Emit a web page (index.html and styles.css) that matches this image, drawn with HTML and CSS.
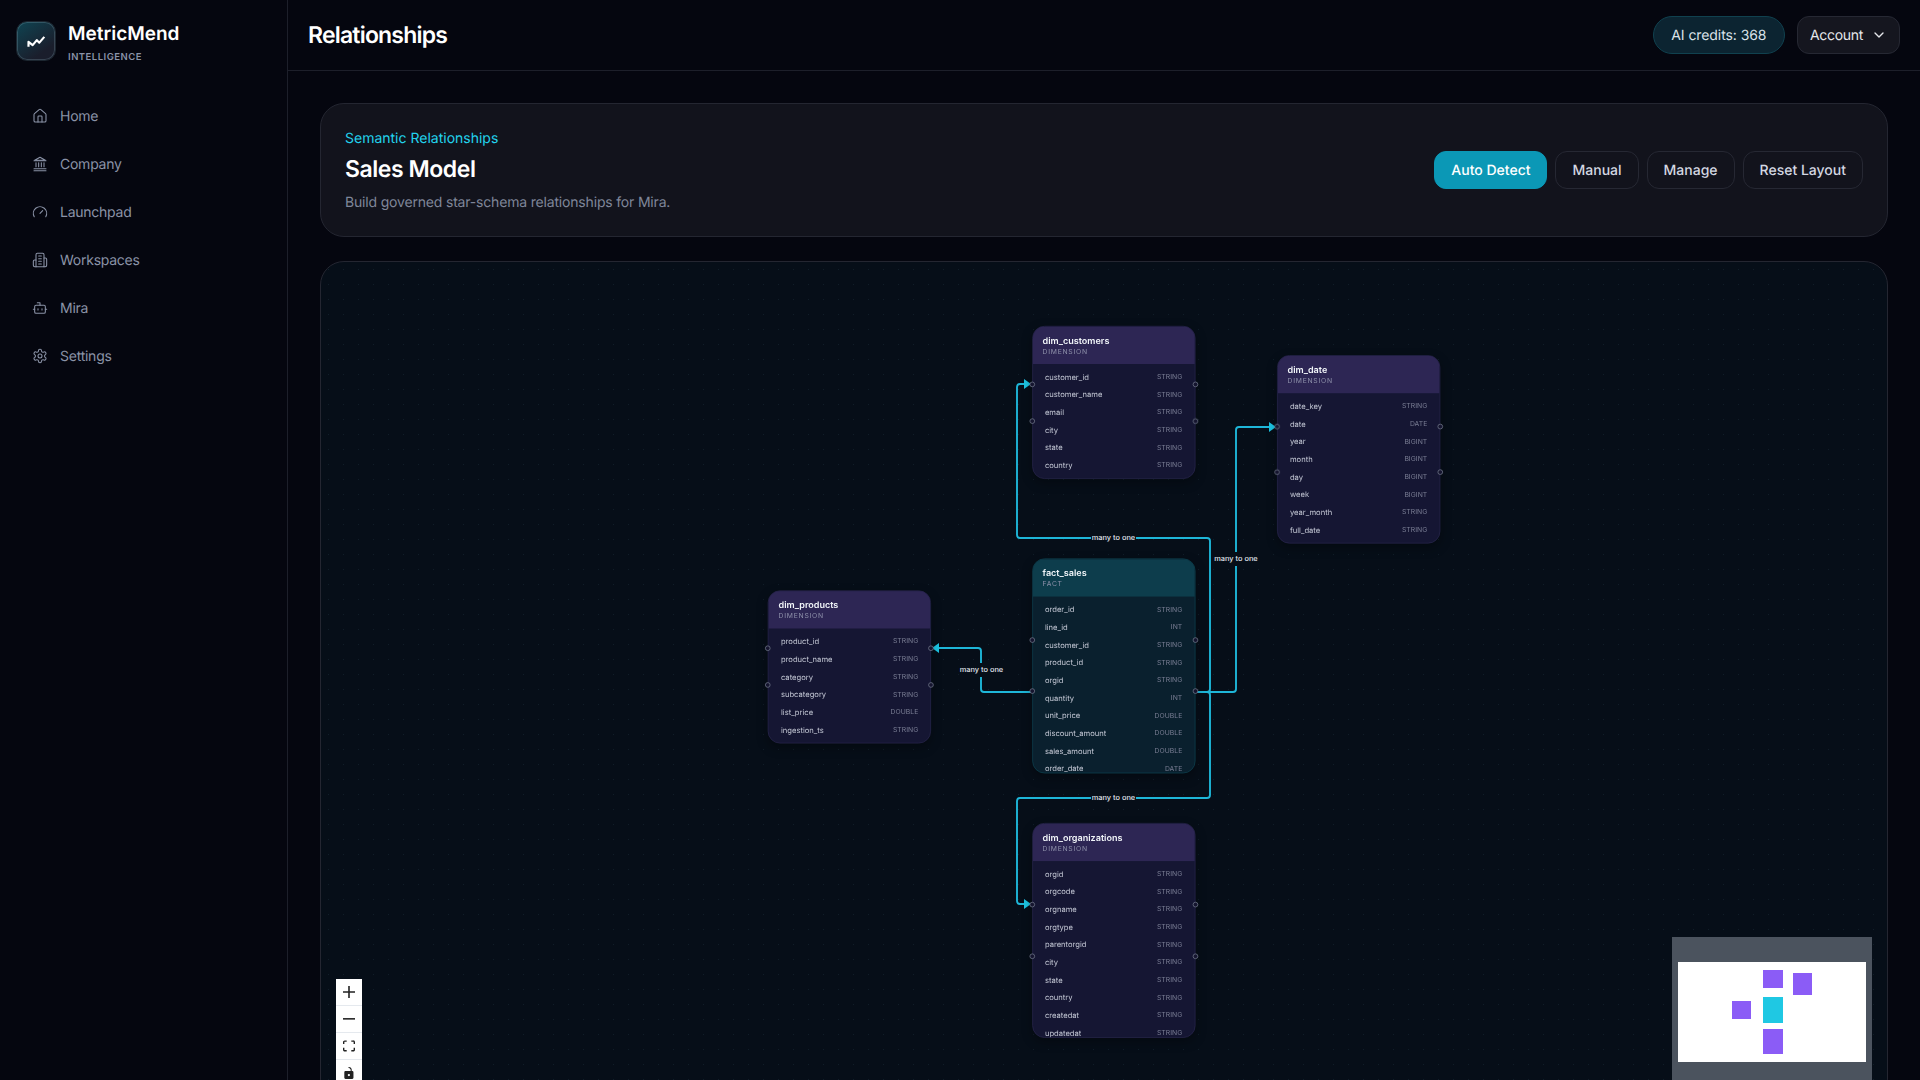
FILE: index.html
```html
<!DOCTYPE html>
<html lang="en">
<head>
    <meta charset="UTF-8">
    <title>Relationships - MetricMend</title>
    <link rel="stylesheet" href="styles.css">
</head>
<body>
    <aside class="sidebar">
        <div class="brand">
            <div class="brand-logo">
                <svg viewBox="0 0 24 24" width="20" height="20" fill="none" stroke="#fff" stroke-width="2.6" stroke-linejoin="round"><path d="M3 19v-6l5 4 5-6 3 3 6-7"/></svg>
            </div>
            <div>
                <div class="brand-name">MetricMend</div>
                <div class="brand-sub">INTELLIGENCE</div>
            </div>
        </div>
        <nav class="nav">
            <a class="nav-item">
                <svg class="nav-icon" viewBox="0 0 24 24"><path d="M15 21v-8a1 1 0 0 0-1-1h-4a1 1 0 0 0-1 1v8"/><path d="M3 10a2 2 0 0 1 .709-1.528l7-5.999a2 2 0 0 1 2.582 0l7 5.999A2 2 0 0 1 21 10v9a2 2 0 0 1-2 2H5a2 2 0 0 1-2-2z"/></svg>
                Home
            </a>
            <a class="nav-item">
                <svg class="nav-icon" viewBox="0 0 24 24"><path d="M3 22h18"/><path d="M3 19h18"/><path d="M6 16v-6"/><path d="M10 16v-6"/><path d="M14 16v-6"/><path d="M18 16v-6"/><path d="M3 7h18"/><path d="M12 2 4 6.5h16z"/></svg>
                Company
            </a>
            <a class="nav-item">
                <svg class="nav-icon" viewBox="0 0 24 24"><path d="m12 14 4-4"/><path d="M3.34 19a10 10 0 1 1 17.32 0"/></svg>
                Launchpad
            </a>
            <a class="nav-item">
                <svg class="nav-icon" viewBox="0 0 24 24"><path d="M6 22V4a2 2 0 0 1 2-2h8a2 2 0 0 1 2 2v18Z"/><path d="M6 12H4a2 2 0 0 0-2 2v6a2 2 0 0 0 2 2h2"/><path d="M18 9h2a2 2 0 0 1 2 2v9a2 2 0 0 1-2 2h-2"/><path d="M10 6h4"/><path d="M10 10h4"/><path d="M10 14h4"/><path d="M10 18h4"/></svg>
                Workspaces
            </a>
            <a class="nav-item">
                <svg class="nav-icon" viewBox="0 0 24 24"><path d="M12 8V4H8"/><rect width="16" height="12" x="4" y="8" rx="2"/><path d="M2 14h2"/><path d="M20 14h2"/><path d="M15 13v2"/><path d="M9 13v2"/></svg>
                Mira
            </a>
            <a class="nav-item">
                <svg class="nav-icon" viewBox="0 0 24 24"><path d="M12.22 2h-.44a2 2 0 0 0-2 2v.18a2 2 0 0 1-1 1.73l-.43.25a2 2 0 0 1-2 0l-.15-.08a2 2 0 0 0-2.73.73l-.22.38a2 2 0 0 0 .73 2.73l.15.1a2 2 0 0 1 1 1.72v.51a2 2 0 0 1-1 1.74l-.15.09a2 2 0 0 0-.73 2.73l.22.38a2 2 0 0 0 2.73.73l.15-.08a2 2 0 0 1 2 0l.43.25a2 2 0 0 1 1 1.73V20a2 2 0 0 0 2 2h.44a2 2 0 0 0 2-2v-.18a2 2 0 0 1 1-1.73l.43-.25a2 2 0 0 1 2 0l.15.08a2 2 0 0 0 2.73-.73l.22-.39a2 2 0 0 0-.73-2.73l-.15-.08a2 2 0 0 1-1-1.74v-.5a2 2 0 0 1 1-1.74l.15-.09a2 2 0 0 0 .73-2.73l-.22-.38a2 2 0 0 0-2.73-.73l-.15.08a2 2 0 0 1-2 0l-.43-.25a2 2 0 0 1-1-1.73V4a2 2 0 0 0-2-2z"/><circle cx="12" cy="12" r="3"/></svg>
                Settings
            </a>
        </nav>
    </aside>

    <div class="main">
        <header class="topbar">
            <h1 class="page-title">Relationships</h1>
            <div class="topbar-right">
                <div class="credits">AI credits: 368</div>
                <button class="account">
                    Account
                    <svg viewBox="0 0 24 24" width="16" height="16" fill="none" stroke="currentColor" stroke-width="2" stroke-linecap="round" stroke-linejoin="round"><path d="m6 9 6 6 6-6"/></svg>
                </button>
            </div>
        </header>

        <div class="content">
            <section class="hero">
                <div>
                    <div class="hero-kicker">Semantic Relationships</div>
                    <h2 class="hero-title">Sales Model</h2>
                    <p class="hero-text">Build governed star-schema relationships for Mira.</p>
                </div>
                <div class="hero-actions">
                    <button class="btn btn-primary">Auto Detect</button>
                    <button class="btn">Manual</button>
                    <button class="btn">Manage</button>
                    <button class="btn">Reset Layout</button>
                </div>
            </section>

            <section class="canvas">
                <!-- viewBox is in page pixels so the edges read the same as the screenshot -->
                <svg class="edges" viewBox="321 262 1566 840">
                    <g class="edge-lines">
                        <path d="M1195 692H1207a3 3 0 0 0 3-3V541a3 3 0 0 0-3-3H1020a3 3 0 0 1-3-3V387a3 3 0 0 1 3-3H1026"/>
                        <path d="M1195 692H1233a3 3 0 0 0 3-3V430a3 3 0 0 1 3-3H1271"/>
                        <path d="M1032 692H984a3 3 0 0 1-3-3V651a3 3 0 0 0-3-3H937"/>
                        <path d="M1195 692H1207a3 3 0 0 1 3 3V795a3 3 0 0 1-3 3H1020a3 3 0 0 0-3 3V901a3 3 0 0 0 3 3H1026"/>
                    </g>
                    <g class="edge-arrows">
                        <path d="M1024 379l7 5-7 5z"/>
                        <path d="M1269 422l7 5-7 5z"/>
                        <path d="M939 643l-7 5 7 5z"/>
                        <path d="M1024 899l7 5-7 5z"/>
                    </g>
                    <g class="edge-labels">
                        <rect x="1091" y="531" width="45" height="14"/>
                        <text x="1113.5" y="540">many to one</text>
                        <rect x="1213" y="552" width="46" height="14"/>
                        <text x="1236" y="561">many to one</text>
                        <rect x="959" y="663" width="45" height="14"/>
                        <text x="981.5" y="672">many to one</text>
                        <rect x="1091" y="791" width="45" height="14"/>
                        <text x="1113.5" y="800">many to one</text>
                    </g>
                </svg>

                <div class="flow">
                    <div class="node node-customers">
                        <span class="handle handle-l1"></span><span class="handle handle-l2"></span>
                        <span class="handle handle-r1"></span><span class="handle handle-r2"></span>
                        <div class="node-inner">
                            <div class="node-head"><div class="node-name">dim_customers</div><div class="node-kind">DIMENSION</div></div>
                            <div class="node-rows">
                                <div class="row"><span>customer_id</span><span class="row-type">STRING</span></div>
                                <div class="row"><span>customer_name</span><span class="row-type">STRING</span></div>
                                <div class="row"><span>email</span><span class="row-type">STRING</span></div>
                                <div class="row"><span>city</span><span class="row-type">STRING</span></div>
                                <div class="row"><span>state</span><span class="row-type">STRING</span></div>
                                <div class="row"><span>country</span><span class="row-type">STRING</span></div>
                            </div>
                        </div>
                    </div>

                    <div class="node node-date">
                        <span class="handle handle-l1"></span><span class="handle handle-l2"></span>
                        <span class="handle handle-r1"></span><span class="handle handle-r2"></span>
                        <div class="node-inner">
                            <div class="node-head"><div class="node-name">dim_date</div><div class="node-kind">DIMENSION</div></div>
                            <div class="node-rows">
                                <div class="row"><span>date_key</span><span class="row-type">STRING</span></div>
                                <div class="row"><span>date</span><span class="row-type">DATE</span></div>
                                <div class="row"><span>year</span><span class="row-type">BIGINT</span></div>
                                <div class="row"><span>month</span><span class="row-type">BIGINT</span></div>
                                <div class="row"><span>day</span><span class="row-type">BIGINT</span></div>
                                <div class="row"><span>week</span><span class="row-type">BIGINT</span></div>
                                <div class="row"><span>year_month</span><span class="row-type">STRING</span></div>
                                <div class="row"><span>full_date</span><span class="row-type">STRING</span></div>
                            </div>
                        </div>
                    </div>

                    <div class="node node-products">
                        <span class="handle handle-l1"></span><span class="handle handle-l2"></span>
                        <span class="handle handle-r1"></span><span class="handle handle-r2"></span>
                        <div class="node-inner">
                            <div class="node-head"><div class="node-name">dim_products</div><div class="node-kind">DIMENSION</div></div>
                            <div class="node-rows">
                                <div class="row"><span>product_id</span><span class="row-type">STRING</span></div>
                                <div class="row"><span>product_name</span><span class="row-type">STRING</span></div>
                                <div class="row"><span>category</span><span class="row-type">STRING</span></div>
                                <div class="row"><span>subcategory</span><span class="row-type">STRING</span></div>
                                <div class="row"><span>list_price</span><span class="row-type">DOUBLE</span></div>
                                <div class="row"><span>ingestion_ts</span><span class="row-type">STRING</span></div>
                            </div>
                        </div>
                    </div>

                    <div class="node node-fact node-sales">
                        <span class="handle handle-l1"></span><span class="handle handle-l2"></span>
                        <span class="handle handle-r1"></span><span class="handle handle-r2"></span>
                        <div class="node-inner">
                            <div class="node-head"><div class="node-name">fact_sales</div><div class="node-kind">FACT</div></div>
                            <div class="node-rows">
                                <div class="row"><span>order_id</span><span class="row-type">STRING</span></div>
                                <div class="row"><span>line_id</span><span class="row-type">INT</span></div>
                                <div class="row"><span>customer_id</span><span class="row-type">STRING</span></div>
                                <div class="row"><span>product_id</span><span class="row-type">STRING</span></div>
                                <div class="row"><span>orgid</span><span class="row-type">STRING</span></div>
                                <div class="row"><span>quantity</span><span class="row-type">INT</span></div>
                                <div class="row"><span>unit_price</span><span class="row-type">DOUBLE</span></div>
                                <div class="row"><span>discount_amount</span><span class="row-type">DOUBLE</span></div>
                                <div class="row"><span>sales_amount</span><span class="row-type">DOUBLE</span></div>
                                <div class="row"><span>order_date</span><span class="row-type">DATE</span></div>
                            </div>
                        </div>
                    </div>

                    <div class="node node-orgs">
                        <span class="handle handle-l1"></span><span class="handle handle-l2"></span>
                        <span class="handle handle-r1"></span><span class="handle handle-r2"></span>
                        <div class="node-inner">
                            <div class="node-head"><div class="node-name">dim_organizations</div><div class="node-kind">DIMENSION</div></div>
                            <div class="node-rows">
                                <div class="row"><span>orgid</span><span class="row-type">STRING</span></div>
                                <div class="row"><span>orgcode</span><span class="row-type">STRING</span></div>
                                <div class="row"><span>orgname</span><span class="row-type">STRING</span></div>
                                <div class="row"><span>orgtype</span><span class="row-type">STRING</span></div>
                                <div class="row"><span>parentorgid</span><span class="row-type">STRING</span></div>
                                <div class="row"><span>city</span><span class="row-type">STRING</span></div>
                                <div class="row"><span>state</span><span class="row-type">STRING</span></div>
                                <div class="row"><span>country</span><span class="row-type">STRING</span></div>
                                <div class="row"><span>createdat</span><span class="row-type">STRING</span></div>
                                <div class="row"><span>updatedat</span><span class="row-type">STRING</span></div>
                            </div>
                        </div>
                    </div>
                </div>

                <div class="controls">
                    <button class="control"><svg viewBox="0 0 32 32"><path d="M32 18.133H18.133V32h-4.266V18.133H0v-4.266h13.867V0h4.266v13.867H32z"/></svg></button>
                    <button class="control"><svg viewBox="0 0 32 5"><path d="M0 0h32v4.2H0z"/></svg></button>
                    <button class="control"><svg viewBox="0 0 32 30"><path d="M3.692 4.63c0-.53.4-.938.939-.938h5.215V0H4.708C2.13 0 0 2.054 0 4.63v5.216h3.692V4.631zM27.354 0h-5.2v3.692h5.17c.53 0 .984.4.984.939v5.215H32V4.631A4.624 4.624 0 0027.354 0zm.954 24.83c0 .532-.4.94-.939.94h-5.215v3.768h5.215c2.577 0 4.631-2.13 4.631-4.707v-5.139h-3.692v5.139zm-23.677.94c-.531 0-.939-.4-.939-.94v-5.138H0v5.139c0 2.577 2.13 4.707 4.708 4.707h5.138V25.77H4.631z"/></svg></button>
                    <button class="control"><svg viewBox="0 0 25 32"><path d="M21.333 10.667H19.81V7.619C19.81 3.429 16.38 0 12.19 0c-4.114 1.828-1.37 2.133.305 2.438 1.676.305 4.42 2.59 4.42 5.181v3.048H3.047A3.056 3.056 0 000 13.714v15.238A3.056 3.056 0 003.048 32h18.285a3.056 3.056 0 003.048-3.048V13.714a3.056 3.056 0 00-3.048-3.047zM12.19 24.533a3.056 3.056 0 01-3.047-3.047 3.056 3.056 0 013.047-3.048 3.056 3.056 0 013.048 3.048 3.056 3.056 0 01-3.048 3.047z"/></svg></button>
                </div>

                <div class="minimap">
                    <div class="minimap-view">
                        <span class="mini mini-customers"></span>
                        <span class="mini mini-date"></span>
                        <span class="mini mini-products"></span>
                        <span class="mini mini-fact"></span>
                        <span class="mini mini-orgs"></span>
                    </div>
                </div>
            </section>
        </div>
    </div>
</body>
</html>
```

FILE: styles.css
```css
* {
    box-sizing: border-box;
}

html, body {
    height: 100%;
    margin: 0;
    overflow: hidden;
}

body {
    display: flex;
    font-family: 'Inter', sans-serif;
    text-rendering: geometricPrecision;
    background-color: #05060f;
    color: #fff;
}

button {
    font-family: inherit;
    text-rendering: inherit;
    cursor: pointer;
}

/* sidebar */
.sidebar {
    width: 288px;
    flex: none;
    border-right: 1px solid #1d1f2a;
    background-color: #05060f;
}

.brand {
    display: flex;
    align-items: flex-start;
    gap: 12px;
    padding: 21px 16px 0;
    height: 70px;
}

.brand-logo {
    width: 40px;
    height: 40px;
    flex: none;
    display: flex;
    align-items: center;
    justify-content: center;
    border-radius: 11px;
    border: 1px solid #1c2630;
    background: linear-gradient(145deg, #0f4452, #1a1e2c 75%);
    box-shadow: inset 0 0 0 1px rgba(160, 200, 215, 0.22);
}

.brand-name {
    font-size: 19px;
    font-weight: 600;
    line-height: 26px;
}

.brand-sub {
    margin-top: 4px;
    font-size: 9.5px;
    font-weight: 600;
    line-height: 14px;
    letter-spacing: 0.5px;
    color: #8a93a8;
}

.nav {
    display: flex;
    flex-direction: column;
    padding: 22px 16px 0;
}

.nav-item {
    display: flex;
    align-items: center;
    gap: 12px;
    height: 48px;
    padding-left: 16px;
    font-size: 14px;
    letter-spacing: -0.25px;
    color: #8b93a7;
}

.nav-icon {
    width: 16px;
    height: 16px;
    flex: none;
    fill: none;
    stroke: currentColor;
    stroke-width: 1.6;
    stroke-linecap: round;
    stroke-linejoin: round;
}

/* top bar */
.main {
    flex: 1;
    min-width: 0;
    display: flex;
    flex-direction: column;
}

.topbar {
    height: 71px;
    flex: none;
    display: flex;
    align-items: center;
    justify-content: space-between;
    padding: 0 20px;
    border-bottom: 1px solid #1d1f2a;
}

.page-title {
    margin: 0;
    font-size: 23px;
    font-weight: 600;
    letter-spacing: -0.8px;
}

.topbar-right {
    display: flex;
    align-items: center;
    gap: 12px;
}

.credits {
    height: 38px;
    padding: 0 17.5px;
    display: flex;
    align-items: center;
    border-radius: 19px;
    border: 1px solid #10414f;
    background-color: #0c2431;
    font-size: 14px;
    letter-spacing: -0.08px;
    color: #dbe2ea;
}

.account {
    height: 38px;
    padding: 0 12px;
    display: flex;
    align-items: center;
    gap: 8px;
    border-radius: 12px;
    border: 1px solid #262833;
    background-color: #15161f;
    font-size: 14px;
    letter-spacing: -0.3px;
    color: #e5e7eb;
}

/* page content */
.content {
    flex: 1;
    padding: 32px 32px 0;
    display: flex;
    flex-direction: column;
    gap: 24px;
}

.hero {
    height: 134px;
    flex: none;
    display: flex;
    align-items: center;
    justify-content: space-between;
    padding: 0 24px;
    border-radius: 24px;
    border: 1px solid #242631;
    background-color: #12131c;
}

.hero-kicker {
    margin-top: 1px;
    font-size: 14px;
    line-height: 20px;
    color: #22d3ee;
}

.hero-title {
    margin: 4px 0 0;
    font-size: 23px;
    font-weight: 600;
    line-height: 32px;
    letter-spacing: -0.45px;
}

.hero-text {
    margin: 8px 0 0;
    font-size: 14px;
    line-height: 20px;
    letter-spacing: -0.18px;
    color: #7f8699;
}

.hero-actions {
    display: flex;
    gap: 8px;
}

.btn {
    height: 38px;
    padding: 0 16px;
    border-radius: 12px;
    border: 1px solid #262833;
    background-color: #12131c;
    font-size: 14px;
    font-weight: 500;
    color: #d4d8e2;
}

.btn-primary {
    border-color: #0b98b6;
    background-color: #0b98b6;
    color: #fff;
}

/* relationship canvas */
.canvas {
    position: relative;
    height: 842px;
    flex: none;
    overflow: hidden;
    border-radius: 24px;
    border: 1px solid #242631;
    background-color: #060e18;
    background-image: radial-gradient(circle, rgba(120, 170, 190, 0.1) 0.7px, transparent 0.8px);
    background-size: 15px 15px;
}

.edges {
    position: absolute;
    left: 0;
    top: 0;
    width: 1566px;
    height: 840px;
}

.edge-lines path {
    fill: none;
    stroke: #1eb6d8;
    stroke-width: 1.9;
}

.edge-arrows path {
    fill: #1cc4e2;
}

.edge-labels rect {
    fill: #060e18;
}

.edge-labels text {
    font-size: 7.4px;
    font-weight: 500;
    text-anchor: middle;
    fill: #e2e8f0;
}

/* flow is scaled the way a zoomed diagram viewport is */
.flow {
    position: absolute;
    left: 0;
    top: 0;
    width: 0;
    height: 0;
    transform: scale(0.68);
    transform-origin: 0 0;
}

.node {
    position: absolute;
    width: 240px;
}

.node-customers { left: 1045.6px; top: 94px; }
.node-date { left: 1405.9px; top: 137px; }
.node-products { left: 657.4px; top: 482.5px; }
.node-sales { left: 1045.6px; top: 435.5px; }
.node-orgs { left: 1045.6px; top: 825px; }

.node-inner {
    overflow: hidden;
    max-height: 316px;
    border-radius: 18px;
    border: 1.5px solid #2b2850;
    background-color: #151633;
    box-shadow: 0 6px 16px rgba(0, 0, 0, 0.3);
}

.node-head {
    height: 55px;
    padding: 12px 14.5px 0;
    background-color: #2d2654;
}

.node-name {
    font-size: 13.3px;
    font-weight: 600;
    line-height: 18px;
    color: #f1f5f9;
}

.node-kind {
    font-size: 10px;
    line-height: 14px;
    letter-spacing: 1.1px;
    color: #8f92ab;
}

.node-rows {
    padding: 6px 18px;
}

.row {
    height: 26px;
    display: flex;
    align-items: center;
    justify-content: space-between;
    font-size: 11.2px;
    color: #c3c7d4;
}

.row-type {
    font-size: 10px;
    letter-spacing: 0.05px;
    color: #7a7e94;
}

.node-fact .node-inner {
    border-color: #0e4654;
    background-color: #0a202e;
}

.node-fact .node-head {
    background-color: #0d3d4c;
}

.handle {
    position: absolute;
    z-index: 1;
    width: 8px;
    height: 8px;
    margin: -4px;
    border-radius: 50%;
    border: 1.5px solid #7b8194;
    background-color: #15152f;
}

.handle-l1 { left: 0; top: 38%; }
.handle-l2 { left: 0; top: 62%; }
.handle-r1 { left: 100%; top: 38%; }
.handle-r2 { left: 100%; top: 62%; }

/* zoom controls */
.controls {
    position: absolute;
    left: 15px;
    bottom: 15px;
    display: flex;
    flex-direction: column;
}

.control {
    width: 26px;
    height: 27px;
    padding: 0;
    display: flex;
    align-items: center;
    justify-content: center;
    border: 0;
    border-bottom: 1px solid #e5e9ee;
    background-color: #fff;
}

.control svg {
    width: 12px;
    height: 12px;
    fill: #222;
}

/* minimap */
.minimap {
    position: absolute;
    right: 15px;
    bottom: 15px;
    width: 200px;
    height: 150px;
    padding-top: 25px;
    padding-left: 6px;
    background-color: #4b535e;
}

.minimap-view {
    position: relative;
    width: 188px;
    height: 100px;
    background-color: #fff;
}

.mini {
    position: absolute;
    width: 20px;
    background-color: #8b5cf6;
}

.mini-customers { left: 85px; top: 8px; height: 18px; }
.mini-date { left: 115px; top: 11px; width: 19px; height: 22px; }
.mini-products { left: 54px; top: 39px; width: 19px; height: 18px; }
.mini-fact { left: 85px; top: 35px; height: 26px; background-color: #1fc8e3; }
.mini-orgs { left: 85px; top: 67px; height: 25px; }
```
